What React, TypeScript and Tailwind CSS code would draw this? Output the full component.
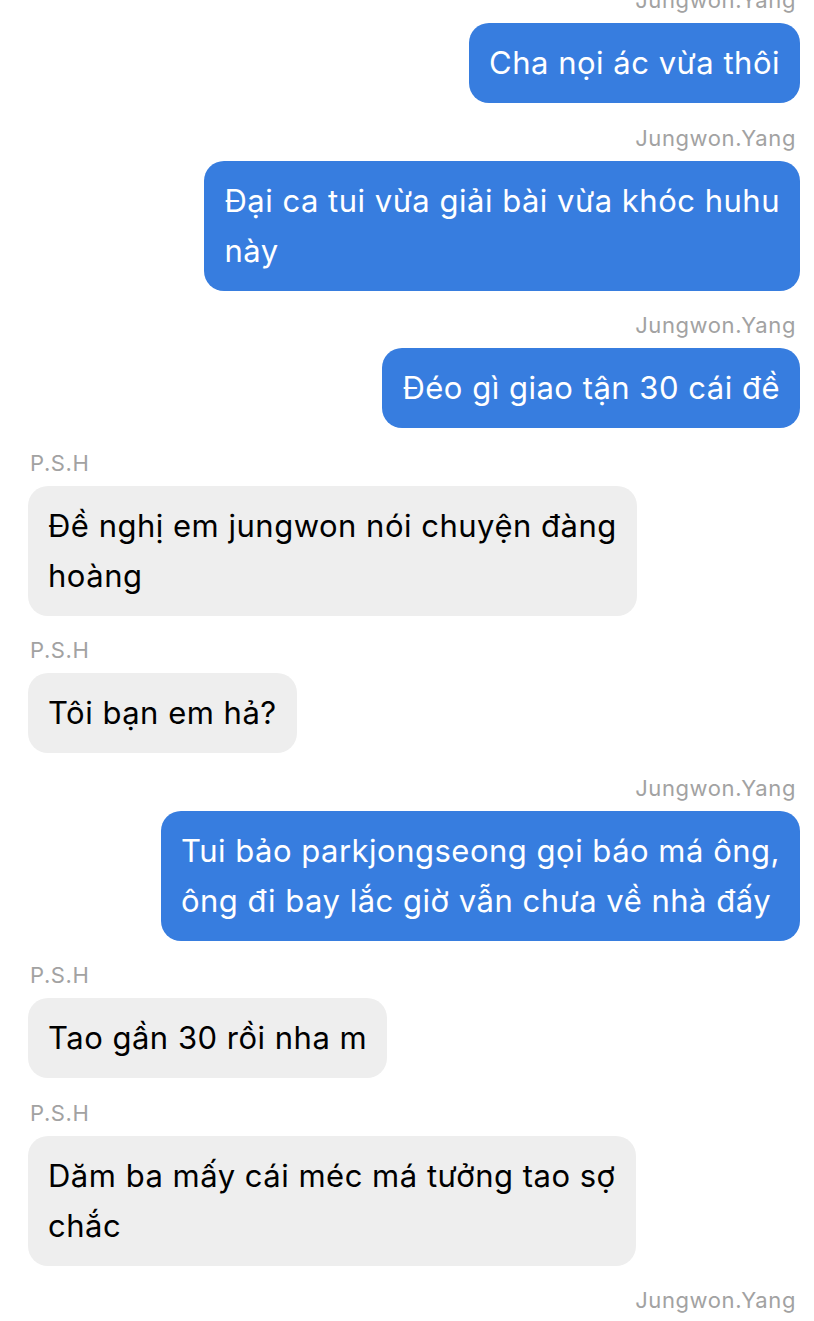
type Msg = { me: boolean; name: string; lines: string[] };

const messages: Msg[] = [
  { me: true, name: "Jungwon.Yang", lines: ["Cha nọi ác vừa thôi"] },
  { me: true, name: "Jungwon.Yang", lines: ["Đại ca tui vừa giải bài vừa khóc huhu", "này"] },
  { me: true, name: "Jungwon.Yang", lines: ["Đéo gì giao tận 30 cái đề"] },
  { me: false, name: "P.S.H", lines: ["Đề nghị em jungwon nói chuyện đàng", "hoàng"] },
  { me: false, name: "P.S.H", lines: ["Tôi bạn em hả?"] },
  {
    me: true,
    name: "Jungwon.Yang",
    lines: ["Tui bảo parkjongseong gọi báo má ông,", "ông đi bay lắc giờ vẫn chưa về nhà đấy"],
  },
  { me: false, name: "P.S.H", lines: ["Tao gần 30 rồi nha m"] },
  { me: false, name: "P.S.H", lines: ["Dăm ba mấy cái méc má tưởng tao sợ", "chắc"] },
];

const font = { fontFamily: "Inter, 'Noto Sans', sans-serif" };

export default function App() {
  return (
    <div className="w-[814px] h-[1321px] overflow-hidden bg-white" style={font}>
      <div className="flex flex-col pl-[28px] pr-[14px] -mt-[13px]">
        {messages.map((m, i) => (
          <div key={i} className={`flex flex-col ${m.me ? "items-end" : "items-start"} ${i > 0 ? "mt-[21.5px]" : ""}`}>
            <div
              className={`text-[22px] leading-[26px] tracking-[0.6px] text-[#a2a2a2] ${m.me ? "mr-[4px]" : "ml-[2px]"}`}
            >
              {m.name}
            </div>
            <div
              className={`mt-[10px] rounded-[20px] px-[20px] py-[15px] text-[31px] leading-[50px] tracking-[0.5px] ${
                m.me ? "bg-[#377ddf] text-white" : "bg-[#eeeeee] text-black"
              }`}
            >
              {m.lines.map((l, j) => (
                <div key={j} className="whitespace-nowrap">
                  {l}
                </div>
              ))}
            </div>
          </div>
        ))}
        <div className="mt-[21.5px] self-end mr-[4px] text-[22px] leading-[26px] tracking-[0.6px] text-[#a2a2a2]">
          Jungwon.Yang
        </div>
      </div>
    </div>
  );
}
